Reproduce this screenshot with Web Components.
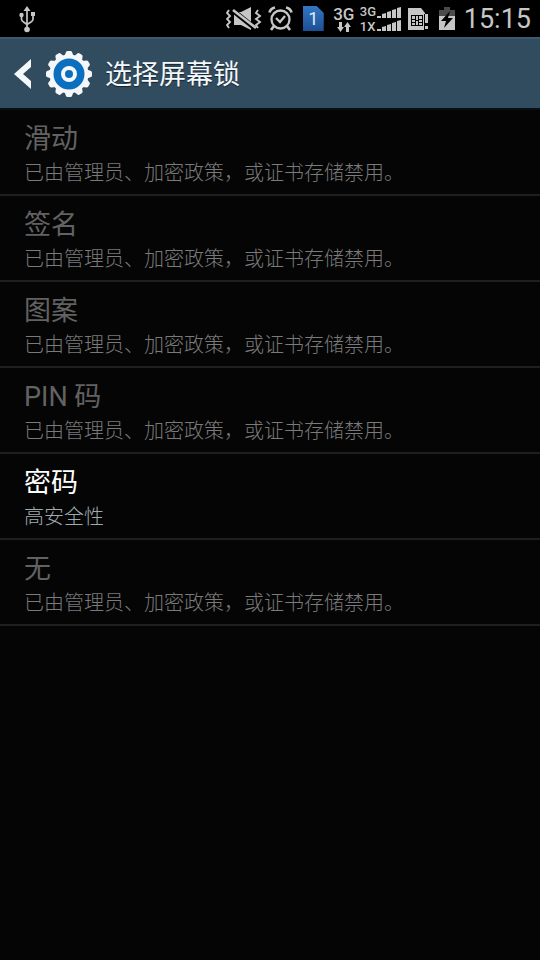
<!DOCTYPE html>
<html lang="zh-CN">
<head>
<meta charset="utf-8">
<meta name="viewport" content="width=device-width, initial-scale=1">
<title>选择屏幕锁</title>
<style>
body { margin: 0; background: #050505; font-family: Roboto, "Noto Sans CJK SC", sans-serif; }
</style>
</head>
<body>
<lock-screen-page></lock-screen-page>

<template id="page-template">
  <style>
    :host { display: flex; flex-direction: column; min-height: 100vh; background: #050505; }
    main { display: flex; flex-direction: column; }
  </style>
  <status-bar></status-bar>
  <action-bar>选择屏幕锁</action-bar>
  <main>
    <lock-option disabled>滑动<span slot="summary">已由管理员、加密政策，或证书存储禁用。</span></lock-option>
    <lock-option disabled>签名<span slot="summary">已由管理员、加密政策，或证书存储禁用。</span></lock-option>
    <lock-option disabled>图案<span slot="summary">已由管理员、加密政策，或证书存储禁用。</span></lock-option>
    <lock-option disabled>PIN 码<span slot="summary">已由管理员、加密政策，或证书存储禁用。</span></lock-option>
    <lock-option>密码<span slot="summary">高安全性</span></lock-option>
    <lock-option disabled>无<span slot="summary">已由管理员、加密政策，或证书存储禁用。</span></lock-option>
  </main>
</template>

<template id="status-template">
  <style>
    :host { display: flex; align-items: center; height: 37px; padding: 0 9px 0 18px; background: #000; color: #c6c6c6; fill: currentColor; }
    svg { display: block; flex: none; }
    .tray { display: flex; align-items: center; margin-left: auto; }
    .vibrate { margin-right: 6px; }
    .alarm { margin-right: 10px; }
    .sim { display: grid; place-items: center; width: 21px; height: 25px; margin-right: 9px; background: linear-gradient(#3377c4, #1c4f94); clip-path: polygon(0 0, 14px 0, 100% 7px, 100% 100%, 0 100%); color: #dceaf8; font-size: 18px; line-height: 25px; }
    .data { display: flex; flex-direction: column; align-items: center; width: 22px; margin-right: 5px; font-size: 17px; line-height: 16px; font-weight: 500; }
    .net { display: flex; flex-direction: column; width: 17px; font-size: 13px; line-height: 15px; font-weight: 500; }
    .bars { margin-right: 6px; }
    .card { margin-right: 9px; }
    .battery { margin-right: 8px; }
    time { font-size: 27px; line-height: 36px; font-weight: 400; }
  </style>
  <svg width="18" height="28" viewBox="0 0 18 28" role="img" aria-label="USB">
    <path d="M9 1l3.500 5h-7z"/><circle cx="9" cy="24.500" r="2.800"/><circle cx="3.500" cy="10" r="2.200"/><path d="M13 7h4v4h-4z"/>
    <path d="M9 4v19M3.500 11v3q0 2 2 3l3.500 2.500 4-2.500q2-1 2-3v-4" fill="none" stroke="currentColor" stroke-width="1.700"/>
  </svg>
  <div class="tray">
    <svg class="vibrate" width="36" height="24" viewBox="0 0 36 24" role="img" aria-label="静音振动">
      <path d="M8 5h7l10-5v23l-10-5H8z"/>
      <path d="M5 2l25 20" stroke="#000" stroke-width="5"/>
      <path d="M7 3l23 18" stroke="currentColor" stroke-width="2.600"/>
      <path d="M3 3l-2 3 3 3-3 3 3 3-3 3 2 3M32 3l-2 3 4 3-4 3 4 3-4 3 2 3" fill="none" stroke="currentColor" stroke-width="1.900"/>
    </svg>
    <svg class="alarm" width="25" height="26" viewBox="0 0 25 26" fill="none" stroke="currentColor" role="img" aria-label="闹钟">
      <circle cx="12.500" cy="13.500" r="9" stroke-width="2.300"/>
      <path d="M8 12l4 4 5-6" stroke-width="2.300"/>
      <path d="M1.500 6.500q1-4 5.500-5M18 1.500q4.500 1 5.500 5M6 20l-3 4M19 20l3 4" stroke-width="2.700"/>
    </svg>
    <span class="sim">1</span>
    <div class="data"><span>3G</span>
      <svg width="14" height="10" viewBox="0 0 14 10"><path d="M2 0h3v5h2L3.500 10 0 5h2zM9 10h3V5h2l-3.500-5L7 5h2z"/></svg>
    </div>
    <div class="net"><span>3G</span><span>1X</span></div>
    <svg class="bars" width="24" height="26" viewBox="0 0 24 26" role="img" aria-label="信号强度">
      <path id="b" d="M0 10h4v2H0zM5 8l4-1v5H5zM10 6l4-1v7h-4zM15 4l4-1v9h-4zM20 2l4-1v11h-4z"/>
      <use href="#b" y="13"/>
    </svg>
    <svg class="card" width="22" height="24" viewBox="0 0 22 24" role="img" aria-label="SIM 卡">
      <path d="M1 1h13l4 5v17H1z"/><path d="M4 8h12v11H4z" fill="#000"/><path d="M5 9h3v3H5zM9 9h2v4H9zM12 9h3v3h-3zM5 13h3v2H5zM12 13h3v2h-3zM5 16h3v2H5zM9 14h2v4H9zM12 16h3v2h-3z"/>
      <path d="M17 7h5v16h-5z" fill="#000"/><path d="M18 7h3v9h-3zM18 19h3v3h-3z"/>
    </svg>
    <svg class="battery" width="18" height="24" viewBox="0 0 18 24" role="img" aria-label="正在充电">
      <path d="M6 0h6v3h5v7H1V3h5z" fill="#4b4b4b"/><path d="M1 9h16v14H1z"/><path d="M12 4l-9 10h5l-2 7 9-10h-5z" fill="#000"/>
    </svg>
    <time datetime="15:15">15:15</time>
  </div>
</template>

<template id="action-template">
  <style>
    :host { display: flex; align-items: center; box-sizing: border-box; height: 73px; padding: 0 12px; background: #324c5f; border-top: 2px solid #3d5b70; border-bottom: 2px solid #0a0f13; color: #f3f8fb; }
    button { display: flex; align-items: center; gap: 14px; margin: 0; padding: 0; border: 0; background: none; }
    svg { display: block; }
    h1 { margin: 0 0 0 12px; padding-top: 2px; font-size: 27px; line-height: 36px; font-weight: 400; text-shadow: 0 1px 1px #14222c; }
  </style>
  <button type="button" aria-label="返回">
    <svg width="19" height="30" viewBox="0 0 19 30"><path d="M19 0v8l-8 7 8 7v8L2 15z" fill="#f3f8fb"/></svg>
    <svg class="gear" width="48" height="48" viewBox="-24 -24 48 48"><g fill="#f5f7f8"></g><circle r="15.500" fill="#0b6fc0"/><circle r="6" fill="none" stroke="#f5f7f8" stroke-width="4"/></svg>
  </button>
  <h1><slot></slot></h1>
</template>

<template id="option-template">
  <style>
    :host { display: block; border-bottom: 2px solid #1f1f1f; }
    button { display: block; width: 100%; margin: 0; padding: 11px 24px 5px; border: 0; background: none; color: #fff; font: inherit; text-align: left; }
    .title, .summary { display: block; }
    .title { font-size: 27px; line-height: 36px; font-weight: 400; }
    .summary { font-size: 20px; line-height: 32px; font-weight: 300; color: #a0abb0; }
    button:disabled { color: #626262; }
    button:disabled .summary { color: #7a7a7a; }
  </style>
  <button type="button"><span class="title"><slot></slot></span><span class="summary"><slot name="summary"></slot></span></button>
</template>

<script>
class TemplateElement extends HTMLElement {
  constructor() {
    super();
    this.attachShadow({ mode: "open" }).append(document.getElementById(this.constructor.template).content.cloneNode(true));
  }
}
class StatusBar extends TemplateElement { static template = "status-template"; }
class ActionBar extends TemplateElement {
  static template = "action-template";
  connectedCallback() {
    // Twelve rounded teeth around a solid disc.
    let teeth = '<circle r="19.500"/>';
    for (let i = 0; i < 12; i++) teeth += `<path d="M-4.500-18L-3-22Q-2.500-23-1.500-23h3Q2.500-23 3-22L4.500-18z" transform="rotate(${i * 30})"/>`;
    this.shadowRoot.querySelector(".gear g").innerHTML = teeth;
  }
}
class LockOption extends TemplateElement {
  static template = "option-template";
  static observedAttributes = ["disabled"];
  attributeChangedCallback() { this.shadowRoot.querySelector("button").disabled = this.hasAttribute("disabled"); }
}
class LockScreenPage extends TemplateElement { static template = "page-template"; }
customElements.define("status-bar", StatusBar);
customElements.define("action-bar", ActionBar);
customElements.define("lock-option", LockOption);
customElements.define("lock-screen-page", LockScreenPage);
</script>
</body>
</html>
